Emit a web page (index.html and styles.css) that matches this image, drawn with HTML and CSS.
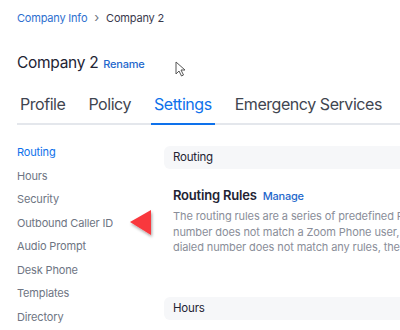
FILE: index.html
```html
<!DOCTYPE html>
<html lang="en">

<head>
    <meta charset="UTF-8">
    <meta name="viewport" content="width=device-width, initial-scale=1.0">
    <title>Company 2 - Settings</title>
    <link rel="stylesheet" href="styles.css">
</head>

<body>
    <div class="page">
        <!-- Breadcrumb -->
        <div class="breadcrumb">
            <a class="crumb-link">Company Info</a>
            <span class="crumb-sep">&#8250;</span>
            <span class="crumb-current">Company 2</span>
        </div>

        <!-- Title -->
        <div class="title-row">
            <h1>Company 2</h1>
            <a class="link rename">Rename</a>
            <svg class="cursor" width="12" height="17" viewBox="0 0 12 17">
                <path d="M1 1 L1 13 L4 10 L6.5 15 L8.5 14 L6 9 L10 9 Z" fill="#fff" stroke="#555" stroke-width="1" stroke-linejoin="round"/>
            </svg>
        </div>

        <!-- Tabs -->
        <div class="tabs">
            <div class="tab">Profile</div>
            <div class="tab">Policy</div>
            <div class="tab active">Settings</div>
            <div class="tab">Emergency Services</div>
        </div>

        <div class="layout">
            <ul class="side-nav">
                <li class="active">Routing</li>
                <li>Hours</li>
                <li>Security</li>
                <li class="pointed">Outbound Caller ID
                    <svg class="pointer" width="30" height="32" viewBox="0 0 30 32">
                        <defs>
                            <filter id="sh" x="-30%" y="-30%" width="160%" height="160%">
                                <feDropShadow dx="1" dy="2" stdDeviation="1.5" flood-color="#000" flood-opacity="0.35"/>
                            </filter>
                        </defs>
                        <polygon points="3,14 24,2 24,27" fill="#f9373e" filter="url(#sh)"/>
                    </svg>
                </li>
                <li>Audio Prompt</li>
                <li>Desk Phone</li>
                <li>Templates</li>
                <li>Directory</li>
            </ul>

            <div class="content">
                <div class="section-head">Routing</div>
                <div class="section-body">
                    <div class="rule-title">
                        <h3>Routing Rules</h3>
                        <a class="link">Manage</a>
                    </div>
                    <p class="desc">The routing rules are a series of predefined Regular Expressions which are used to route outbound calls. If the dialed<br>number does not match a Zoom Phone user, and it matches a routing rule, the call will be routed according to the rule. If the<br>dialed number does not match any rules, the call will be routed through the default route.</p>
                </div>
                <div class="section-head">Hours</div>
            </div>
        </div>
    </div>
</body>

</html>
```

FILE: styles.css
```css
body {
    margin: 0;
    font-family: Inter, "Noto Sans", sans-serif;
    background-color: white;
    color: #232333;
    overflow: hidden;
}

.page {
    padding: 0 0 0 17px;
    width: 700px;
}

.breadcrumb {
    padding-top: 11px;
    font-size: 11px;
    letter-spacing: -0.2px;
    display: flex;
    align-items: center;
    gap: 7px;
}

.crumb-link {
    color: #2d6fcf;
}

.crumb-sep {
    color: #6e7680;
    font-size: 13px;
    margin-top: -2px;
}

.crumb-current {
    color: #39394d;
}

.title-row {
    display: flex;
    align-items: baseline;
    margin-top: 28px;
    position: relative;
}

.title-row h1 {
    font-size: 15.5px;
    font-weight: 400;
    letter-spacing: -0.3px;
    margin: 0 5px 0 0;
}

.link {
    color: #1f68cc;
    font-size: 11px;
    font-weight: 500;
    letter-spacing: -0.2px;
}

.cursor {
    position: absolute;
    left: 158px;
    top: 8px;
}

.tabs {
    display: flex;
    gap: 17px;
    margin-top: 22px;
    border-bottom: 2px solid #e4e7ec;
}

.tab {
    font-size: 16px;
    letter-spacing: -0.45px;
    color: #3f4550;
    padding: 0 3px 9px;
    margin-bottom: -2px;
    border-bottom: 2px solid transparent;
}

.tab.active {
    color: #0e71eb;
    border-bottom-color: #0e71eb;
}

.layout {
    display: grid;
    grid-template-columns: 147px 1fr;
    margin-top: 20px;
}

.side-nav {
    list-style: none;
    margin: 0;
    padding: 0;
}

.side-nav li {
    font-size: 11px;
    letter-spacing: -0.15px;
    color: #6e7583;
    height: 23.5px;
    line-height: 14px;
}

.side-nav li.active {
    color: #0e71eb;
}

.pointed {
    position: relative;
}

.pointer {
    position: absolute;
    left: 110px;
    top: -8px;
}

.content {
    padding-top: 1px;
}

.section-head {
    background-color: #f6f7f9;
    border-radius: 6px;
    height: 23px;
    line-height: 23px;
    padding-left: 9px;
    font-size: 11.5px;
    letter-spacing: -0.2px;
    color: #232333;
}

.section-body {
    padding: 18px 0 0 9px;
    height: 110px;
}

.rule-title {
    display: flex;
    align-items: baseline;
    gap: 6px;
}

.rule-title h3 {
    margin: 0;
    font-size: 13px;
    font-weight: 600;
    letter-spacing: -0.2px;
}

.desc {
    margin: 6px 0 0;
    font-size: 11px;
    letter-spacing: -0.1px;
    line-height: 15.5px;
    color: #8a8e99;
    white-space: nowrap;
}
```
